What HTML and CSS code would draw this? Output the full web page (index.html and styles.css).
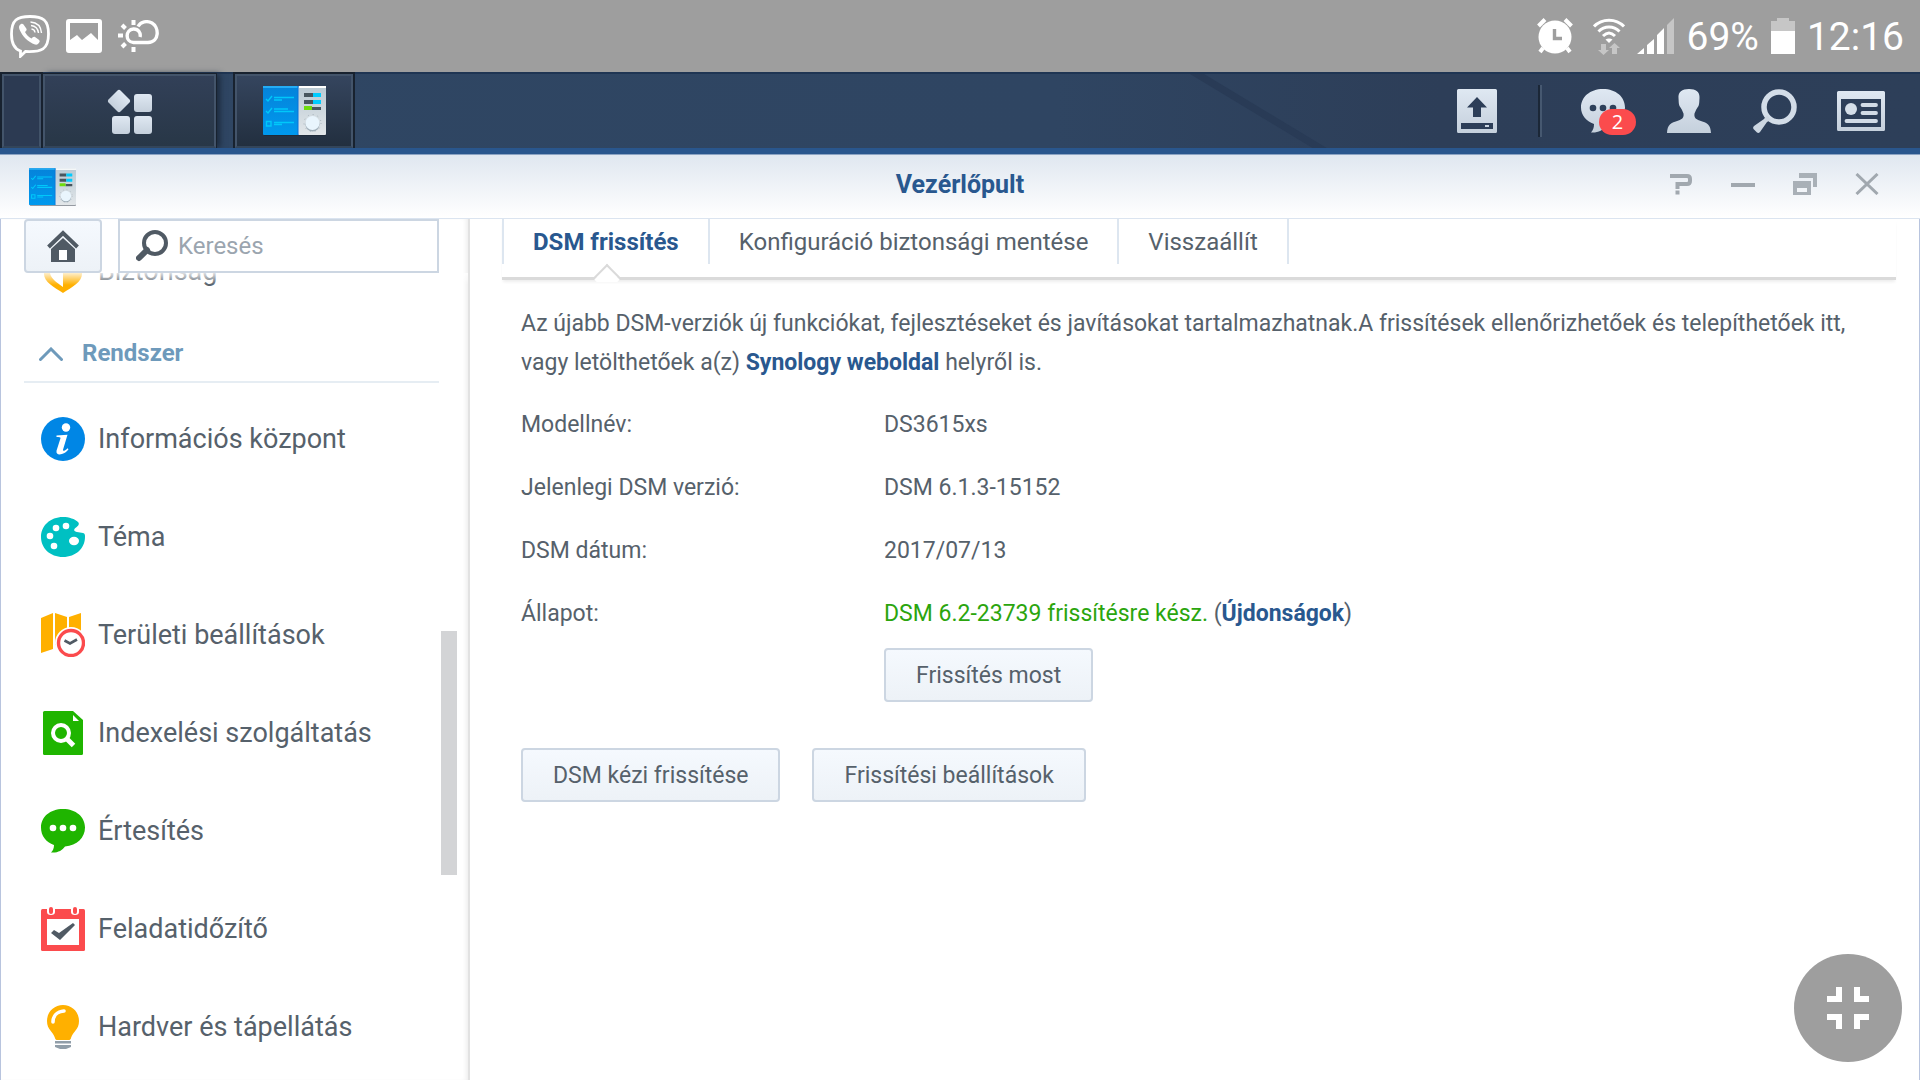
FILE: index.html
```
<!DOCTYPE html>
<html lang="hu">
<head>
    <meta charset="UTF-8">
    <meta name="viewport" content="width=device-width, initial-scale=1.0">
    <title>Vezérlőpult</title>
    <link rel="stylesheet" href="styles.css">
</head>
<body>
    <svg class="defs" aria-hidden="true">
        <linearGradient id="light" x1="0" y1="0" x2="0" y2="1">
            <stop offset="0" stop-color="#dfe8f2"/>
            <stop offset="1" stop-color="#c5d0dc"/>
        </linearGradient>
        <linearGradient id="blue" x1="0" y1="0" x2="0" y2="1">
            <stop offset="0" stop-color="#0583da"/>
            <stop offset="1" stop-color="#0099ee"/>
        </linearGradient>
        <linearGradient id="panel" x1="0" y1="0" x2="0" y2="1">
            <stop offset="0" stop-color="#b9c9d3"/>
            <stop offset="1" stop-color="#e2e6e9"/>
        </linearGradient>
        <symbol id="control-panel" viewBox="0 0 63 50">
            <rect x="1" y="2" width="62" height="48" rx="1" fill="#1c2733" opacity="0.6"/>
            <rect width="36" height="49" rx="1" fill="url(#blue)"/>
            <rect x="35" width="28" height="49" rx="1" fill="url(#panel)"/>
            <path d="M36 1h27" stroke="#fff" stroke-width="2"/>
            <path d="M0 1h35" stroke="#25adf5" stroke-width="2"/>
            <path d="M35 0v49" stroke="#0871d8"/>
            <g fill="none" stroke="#00c8fa" stroke-width="1.4">
                <path d="M3 13l2 2 4-5M3 25l2 2 4-5M3.500 35.500h4.500v4.500h-4.500z"/>
                <path d="M11 11.500h20M11 14h8M11 23h14M11 25.500h20M11 36.500h20M11 38.500h8"/>
            </g>
            <path d="M41 7h9v4h-9zM41 14h9v4h-9zM49 21h9v3h-9z" fill="#48565f"/>
            <path d="M50 7h8v4h-8zM50 14h8v4h-8z" fill="#0cf"/>
            <path d="M41 20h8v4h-8z" fill="#6fdc0c"/>
            <circle cx="49.500" cy="37" r="8.500" fill="none" stroke="#a3b1bb" stroke-width="1" stroke-dasharray="1 4"/>
            <circle cx="49.500" cy="38.500" r="7" fill="#8698a5" opacity="0.7"/>
            <circle cx="49.500" cy="37" r="7" fill="#e9f5fd"/>
        </symbol>
    </svg>

    <div class="statusbar">
        <div class="status-left">
            <svg width="40" height="43" viewBox="0 0 40 43" fill="none" stroke="#fff">
                <path d="M20 1.500C7 1.500 1.500 5 1.500 19c0 10 3 15 9 17v5.200l5-4.700c16 .8 23-2 23-17.500C38.500 5 33 1.500 20 1.500z" stroke-width="2.800"/>
                <path d="M11 9c-2 1-2.500 3-1.500 5.500 3 7 8.500 12.500 15.500 15 2 .5 3.500-.5 4.500-2.500.5-1 0-2-1-2.600l-3.500-2.400c-1.500-.8-2.500.5-3.500 1.500-3-1.500-5-3.500-6.500-6.500 1-1 2.300-2 1.300-3.500L13.500 9.500c-.6-.8-1.500-1-2.500-.5z" fill="#fff" stroke="none"/>
                <path d="M20.500 7c6.500.5 10.500 4.500 11 11M21 10.500c4 .5 7 3 7.500 7.500M21.500 14c2 .2 3.300 1.500 3.500 3.500" stroke-width="1.400"/>
            </svg>
            <svg width="36" height="34" viewBox="0 0 36 34">
                <path d="M3 0h30a3 3 0 0 1 3 3v28a3 3 0 0 1-3 3H3a3 3 0 0 1-3-3V3a3 3 0 0 1 3-3zM4 4v17l7-5 5 5 9-7 7 7V4z" fill="#fff" fill-rule="evenodd"/>
            </svg>
            <svg width="42" height="32" viewBox="0 0 42 32" fill="none" stroke="#fff" stroke-width="3.400">
                <path d="M20 6.500c3-5 9-6 14-3.500 7 4 8 19-4 19.500H15.500c-8.500-.5-8.500-13 0-13.500 5-.2 7.500 4 6.500 8"/>
                <path d="M15.500 0v5M15.500 27v5M0 15.500h5M4 5l3.500 3.500M4 27l3.500-3.500" stroke-width="4"/>
            </svg>
        </div>
        <div class="status-right">
            <svg width="36" height="36" viewBox="0 0 36 36">
                <path d="M6 30l-3 4M30 30l3 4" stroke="#fff" stroke-width="4"/>
                <path d="M1.500 8L8 1.500M28 1.500L34.500 8" stroke="#fff" stroke-width="4"/>
                <circle cx="18" cy="19" r="16.500" fill="#fff"/>
                <path d="M17.500 11v9.500H25" fill="none" stroke="#9e9e9e" stroke-width="3.400"/>
            </svg>
            <svg class="wifi" width="32" height="37" viewBox="0 0 32 37" fill="none" stroke="#fff" stroke-width="3">
                <path d="M1 8.500C9 0 23 0 31 8.500M5.500 13.500c6-6 15-6 21 0M10 18c4-4 8-4 12 0"/>
                <path d="M12.500 21.500c2-1.500 5-1.500 7 0L16 25z" fill="#fff" stroke="none"/>
                <path d="M8 26h5v6h3l-5.500 5L5 32h3zM19 36h5v-6h3l-5.500-5-5.500 5h3z" fill="#c6c6c6" stroke="none"/>
            </svg>
            <svg width="37" height="36" viewBox="0 0 37 36" fill="#fff">
                <path d="M0 36l7-6v6zM10 27l7-6v15h-7zM20 17l7-7v26h-7z"/>
                <path d="M30 7l7-7v36h-7z" fill="#c6c6c6"/>
            </svg>
            <span>69%</span>
            <svg width="24" height="36" viewBox="0 0 24 36">
                <path d="M6 0h12v3h6v11H0V3h6z" fill="#c6c6c6"/>
                <path d="M0 13h24v23H0z" fill="#fff"/>
            </svg>
            <span>12:16</span>
        </div>
    </div>

    <header class="taskbar">
        <button class="task-edge" aria-label="Asztal"></button>
        <button class="task-menu" aria-label="Főmenü">
            <svg width="45" height="45" viewBox="0 0 45 45" fill="url(#light)">
                <rect x="3.500" y="3.500" width="17" height="17" rx="2.500" transform="rotate(45 12 12)"/>
                <rect x="27" y="5" width="18" height="18" rx="3"/>
                <rect x="5" y="27" width="18" height="18" rx="3"/>
                <rect x="27" y="27" width="18" height="18" rx="3"/>
            </svg>
        </button>
        <button class="task-app" aria-label="Vezérlőpult">
            <svg width="63" height="50"><use href="#control-panel"/></svg>
        </button>
        <svg class="streak" width="140" height="76" viewBox="0 0 140 76">
            <path d="M0 0h14l126 76h-14z" fill="#293b56"/>
        </svg>
        <div class="tray">
            <button aria-label="Feltöltés">
                <svg width="40" height="44" viewBox="0 0 40 44">
                    <path d="M1.500 0h37A1.500 1.500 0 0 1 40 1.500v41a1.500 1.500 0 0 1-1.500 1.500h-37A1.500 1.500 0 0 1 0 42.500v-41A1.500 1.500 0 0 1 1.500 0zM20 8L10 18.500h6V28h8v-9.500h6zM4 34v6h32v-6zM28 36h4v2h-4z" fill="url(#light)" fill-rule="evenodd"/>
                </svg>
            </button>
            <span class="divider"></span>
            <button class="notify" aria-label="Értesítések">
                <svg width="44" height="44" viewBox="0 0 44 44">
                    <path d="M22 0C9 0 0 8 0 18.500 0 26 5 32 13 35c0 4-1 6-3 8.500 7 .5 12-2 15-7 11-1 19-8 19-18C44 8 35 0 22 0z" fill="url(#light)"/>
                    <g fill="#2e405a"><circle cx="12" cy="19" r="3.300"/><circle cx="22" cy="19" r="3.300"/><circle cx="32" cy="19" r="3.300"/></g>
                </svg>
                <span class="badge">2</span>
            </button>
            <button aria-label="Beállítások">
                <svg width="44" height="44" viewBox="0 0 44 44">
                    <path d="M22 0c7 0 11 3 10.500 9-.3 4 0 5.500-1 8-2 2.500-3 5-4 7.500-.6 4 1 5.500 5 7 8 2.500 11 4 11.500 12.500H0c.5-8.500 3.500-10 11.500-12.500 4-1.500 5.600-3 5-7-1-2.500-2-5-4-7.500-1-2.500-.7-4-1-8C11 3 15 0 22 0z" fill="url(#light)"/>
                </svg>
            </button>
            <button aria-label="Keresés">
                <svg width="44" height="44" viewBox="0 0 44 44">
                    <circle cx="26" cy="18" r="15" fill="none" stroke="#d3dde8" stroke-width="5.500"/>
                    <path d="M14 26l4 5-4 2-7 10q-1.500 1.500-3 .5L.5 40q-1-1.500.5-3l10-7z" fill="#ccd6e1"/>
                </svg>
            </button>
            <button aria-label="Widgetek">
                <svg width="48" height="40" viewBox="0 0 48 40">
                    <path d="M1.500 0h45A1.500 1.500 0 0 1 48 1.500v37a1.500 1.500 0 0 1-1.500 1.500h-45A1.500 1.500 0 0 1 0 38.500v-37A1.500 1.500 0 0 1 1.500 0zM4 8v28h40V8z" fill="url(#light)" fill-rule="evenodd"/>
                    <circle cx="14" cy="18" r="6" fill="#d5dfe9"/>
                    <path d="M25.500 14H39M25.500 22H39M9.500 30H39" stroke="#d2dce7" stroke-width="3.800" stroke-linecap="round"/>
                </svg>
            </button>
        </div>
    </header>

    <main class="window">
        <div class="titlebar">
            <svg class="title-icon" width="47" height="38"><use href="#control-panel"/></svg>
            <h1>Vezérlőpult</h1>
            <div class="window-buttons">
                <button aria-label="Súgó">
                    <svg width="24" height="22" viewBox="0 0 24 22" fill="none" stroke="#a1a8af" stroke-width="4">
                        <path d="M1 3h17q3 0 3 3v2q0 3-3 3H8.500v5M6.500 19.500h4"/>
                    </svg>
                </button>
                <button aria-label="Kis méret">
                    <svg width="24" height="22" viewBox="0 0 24 22"><path d="M0 12h24" stroke="#a1a8af" stroke-width="4"/></svg>
                </button>
                <button aria-label="Előző méret">
                    <svg width="24" height="22" viewBox="0 0 24 22" fill="#a9b0b7">
                        <path d="M6 0h18v14h-4V5H6z"/>
                        <path d="M0 8h18v14H0zM4 15v4h10v-4z" fill-rule="evenodd"/>
                    </svg>
                </button>
                <button aria-label="Bezárás">
                    <svg width="24" height="22" viewBox="0 0 24 22"><path d="M1.500 1l21 20M22.500 1l-21 20" stroke="#a1a8af" stroke-width="3"/></svg>
                </button>
            </div>
        </div>

        <div class="window-body">
            <aside class="sidebar">
                <div class="sidebar-tools">
                    <button class="btn home" aria-label="Kezdőlap">
                        <svg width="32" height="32" viewBox="0 0 32 32">
                            <path d="M1.500 17L16 3l14.500 14" fill="none" stroke="#505a64" stroke-width="4"/>
                            <path d="M4 19L16 8l12 11v13h-8V20h-8v12H4z" fill="#505a64"/>
                            <path d="M12 20h8v10h-8z" fill="#fff"/>
                            <path d="M4 31h24" stroke="#505a64" stroke-width="2"/>
                        </svg>
                    </button>
                    <label class="search">
                        <svg width="32" height="32" viewBox="0 0 32 32">
                            <circle cx="19" cy="13" r="11" fill="none" stroke="#505a64" stroke-width="4"/>
                            <path d="M11 20l-8 8" stroke="#505a64" stroke-width="6" stroke-linecap="round"/>
                        </svg>
                        <input type="text" placeholder="Keresés" aria-label="Keresés">
                    </label>
                </div>
                <nav class="menu">
                    <a class="item scrolled" href="#">
                        <svg width="44" height="44" viewBox="0 0 44 44">
                            <path d="M22 1l19 6v18c0 8-10 13-19 19C13 38 3 33 3 25V7z" fill="#ffb000"/>
                            <path d="M22 7v31c-7-5-13-9-13-15V11z" fill="#fff"/>
                        </svg>
                        Biztonság
                    </a>
                    <h2 class="section">
                        <svg width="24" height="14" viewBox="0 0 24 14"><path d="M1.500 12.500L12 2l10.500 10.500" fill="none" stroke="#6e9abb" stroke-width="3" stroke-linecap="round"/></svg>
                        Rendszer
                    </h2>
                    <a class="item" href="#">
                        <svg width="44" height="44" viewBox="0 0 44 44">
                            <circle cx="22" cy="22" r="22" fill="#0086e5"/>
                            <circle cx="25" cy="10.500" r="4.200" fill="#fff"/>
                            <path d="M15.500 18.500l11-.8-4.500 15c-.3 1.800 1.500 1.500 4.500-1.500l1 1c-3 5-13 8-12 1.500l4-12.500c.3-1-1.500-1.200-4-1.200z" fill="#fff"/>
                        </svg>
                        Információs központ
                    </a>
                    <a class="item" href="#">
                        <svg width="44" height="44" viewBox="0 0 44 44">
                            <path d="M22 2c6 0 12 2 15 5 2 2 0 4-2 5.500-3 2-2 4 1 4.500l6 1c2 .5 2 2 2 4 0 11-9 20-22 20S0 33 0 22 9 2 22 2z" fill="#00c0c2"/>
                            <g fill="#fff"><circle cx="9" cy="21" r="3.300"/><circle cx="15" cy="13" r="3.300"/><circle cx="25" cy="11" r="3.300"/><circle cx="13" cy="31" r="3.300"/><ellipse cx="33" cy="26" rx="5" ry="4.200"/></g>
                        </svg>
                        Téma
                    </a>
                    <a class="item" href="#">
                        <svg width="44" height="44" viewBox="0 0 44 44">
                            <path d="M0 5l12-5v36L0 40zM14 0l12 4v32l-12-4zM28 4l12-4v30H28z" fill="#ffb000"/>
                            <circle cx="30" cy="30" r="16" fill="#fff"/>
                            <circle cx="30" cy="30" r="12.500" fill="#fff" stroke="#fb4b4d" stroke-width="3.400"/>
                            <path d="M23.500 27.500l5.500 3 7-4" fill="none" stroke="#505a64" stroke-width="2.600"/>
                        </svg>
                        Területi beállítások
                    </a>
                    <a class="item" href="#">
                        <svg width="44" height="44" viewBox="0 0 44 44">
                            <path d="M3.500 0H32l10 9v33.500q0 1.500-1.500 1.500h-37Q2 44 2 42.500v-41Q2 0 3.500 0z" fill="#1fb500"/>
                            <path d="M32 4v6h6z" fill="#fff"/>
                            <circle cx="20" cy="22" r="8" fill="none" stroke="#fff" stroke-width="4"/>
                            <path d="M25.500 27.500l7 7" stroke="#fff" stroke-width="5"/>
                        </svg>
                        Indexelési szolgáltatás
                    </a>
                    <a class="item" href="#">
                        <svg width="44" height="44" viewBox="0 0 44 44">
                            <path d="M22 0C9 0 0 8 0 18.500 0 27 5 33 13 36c0 3-1 5.500-3 7.500 7 .5 11-2 14-6 12-1 20-9 20-19C44 8 35 0 22 0z" fill="#1fb500"/>
                            <g fill="#fff"><circle cx="12" cy="19" r="3.300"/><circle cx="22" cy="19" r="3.300"/><circle cx="32" cy="19" r="3.300"/></g>
                        </svg>
                        Értesítés
                    </a>
                    <a class="item" href="#">
                        <svg width="44" height="44" viewBox="0 0 44 44">
                            <rect y="2" width="44" height="42" rx="1.500" fill="#fb4b4d"/>
                            <path d="M6 12h32v26H6z" fill="#fff"/>
                            <path d="M6 0h8v5q0 3-4 3t-4-3zM30 0h8v5q0 3-4 3t-4-3z" fill="#fff"/>
                            <path d="M10 2v3M34 2v3" stroke="#fb4b4d" stroke-width="4" stroke-linecap="round"/>
                            <path d="M10 26l3-3 5 3L32 16l2 2-15 15z" fill="#505a64"/>
                        </svg>
                        Feladatidőzítő
                    </a>
                    <a class="item" href="#">
                        <svg width="44" height="44" viewBox="0 0 44 44">
                            <path d="M22 0c9 0 16 7 16 16 0 9-6 10-8 17-.3 1.500-1 2-2.500 2h-11c-1.500 0-2.200-.5-2.500-2-2-7-8-8-8-17C6 7 13 0 22 0z" fill="#ffb000"/>
                            <path d="M12 17c0-6 4-10.500 11-11" fill="none" stroke="#fff" stroke-width="3.600" stroke-linecap="round"/>
                            <path d="M14 36h16v2.500H14zM14 40h16v2l-5 2h-6l-5-2z" fill="#919ea9"/>
                        </svg>
                        Hardver és tápellátás
                    </a>
                </nav>
                <div class="scrollbar"></div>
            </aside>

            <section class="content">
                <nav class="tabs">
                    <a class="tab active" href="#">DSM frissítés</a>
                    <a class="tab" href="#">Konfiguráció biztonsági mentése</a>
                    <a class="tab" href="#">Visszaállít</a>
                </nav>
                <div class="details">
                    <p>Az újabb DSM-verziók új funkciókat, fejlesztéseket és javításokat tartalmazhatnak.A frissítések ellenőrizhetőek és telepíthetőek itt, vagy letölthetőek a(z) <a href="#">Synology weboldal</a> helyről is.</p>
                    <table>
                        <tr><th>Modellnév:</th><td>DS3615xs</td></tr>
                        <tr><th>Jelenlegi DSM verzió:</th><td>DSM 6.1.3-15152</td></tr>
                        <tr><th>DSM dátum:</th><td>2017/07/13</td></tr>
                        <tr><th>Állapot:</th><td><span class="ready">DSM 6.2-23739 frissítésre kész.</span> (<a href="#">Újdonságok</a>)</td></tr>
                        <tr class="action"><td></td><td><button class="btn">Frissítés most</button></td></tr>
                    </table>
                    <div class="buttons">
                        <button class="btn">DSM kézi frissítése</button>
                        <button class="btn">Frissítési beállítások</button>
                    </div>
                </div>
            </section>
        </div>
    </main>

    <button class="shrink" aria-label="Kilépés a teljes képernyőből">
        <svg width="42" height="42" viewBox="0 0 42 42" fill="none" stroke="#fff" stroke-width="6">
            <path d="M0 12h12V0M42 12H30V0M0 30h12v12M42 30H30v12"/>
        </svg>
    </button>
</body>
</html>
```
FILE: styles.css
```
* {
    box-sizing: border-box;
    margin: 0;
    padding: 0;
}

body {
    display: flex;
    flex-direction: column;
    height: 100vh;
    overflow: hidden;
    font-family: Roboto, sans-serif;
    font-size: 24px;
    line-height: 39px;
    color: #56616b;
    background: #fff;
}

button {
    font: inherit;
    color: inherit;
    background: none;
    border: none;
    cursor: pointer;
}

a {
    color: #29588f;
    font-weight: bold;
    text-decoration: none;
}

svg {
    display: block;
    flex-shrink: 0;
}

.defs {
    position: absolute;
    width: 0;
    height: 0;
}

/* phone status bar */
.statusbar {
    display: flex;
    justify-content: space-between;
    align-items: center;
    flex-shrink: 0;
    height: 72px;
    padding: 0 16px 0 10px;
    background: #9e9e9e;
    color: #fff;
    font-size: 39px;
}

.status-left {
    display: flex;
    align-items: center;
    gap: 16px;
}

.status-right {
    display: flex;
    align-items: center;
    gap: 12px;
}

.status-right span {
    padding-top: 2px;
}

.wifi {
    margin-left: 8px;
}

/* taskbar */
.taskbar {
    display: flex;
    flex-shrink: 0;
    height: 76px;
    border-top: 2px solid #1f3553;
    background: linear-gradient(90deg, #2f4663, #2f4562 55%, #2d3e58 75%, #2d3f59);
}

.taskbar button {
    display: flex;
    justify-content: center;
    align-items: center;
}

.taskbar .task-edge,
.taskbar .task-menu,
.taskbar .task-app {
    border: 2px solid #43546a;
    border-bottom-color: #33455a;
    background: linear-gradient(#324058, #283747);
    box-shadow: 0 0 0 2px #18222f;
}

.taskbar .task-edge {
    width: 39px;
    margin-left: 2px;
    background: #2c3a52;
}

.taskbar .task-menu {
    width: 173px;
    margin-left: 2px;
    box-shadow: 0 0 0 1px #18222f, 4px 0 6px #1c2a3c;
}

.taskbar .task-app {
    width: 118px;
    margin-left: 19px;
    background: linear-gradient(#35455e, #222f3f);
}

.streak {
    margin-left: auto;
}

.tray {
    display: flex;
    align-items: center;
    margin-left: 104px;
    padding-right: 16px;
}

.tray button {
    width: 86px;
    height: 74px;
}

.divider {
    width: 4px;
    height: 52px;
    margin: 0 18px;
    border-left: 2px solid #1b2737;
    border-right: 2px solid #465870;
}

.notify {
    position: relative;
}

.badge {
    position: absolute;
    left: 39px;
    top: 35px;
    width: 37px;
    border-radius: 13px;
    background: #fb4b4d;
    color: #fff;
    font: 20px/26px "Open Sans", sans-serif;
}

/* window */
.window {
    display: flex;
    flex-direction: column;
    flex: 1;
    min-height: 0;
    border-top: 6px solid #29568d;
}

.titlebar {
    display: grid;
    grid-template-columns: 1fr auto 1fr;
    align-items: center;
    flex-shrink: 0;
    height: 65px;
    padding: 0 22px;
    border-top: 1px solid #8ba3c3;
    border-bottom: 1px solid #dbe4f0;
    background: linear-gradient(#e0e7f0, #fff);
}

.title-icon {
    margin-left: 7px;
}

.titlebar h1 {
    padding-bottom: 5px;
    font-size: 25px;
    color: #29588f;
}

.window-buttons {
    display: flex;
    justify-content: flex-end;
    padding-bottom: 5px;
}

.window-buttons button {
    display: flex;
    justify-content: center;
    width: 62px;
}

.window-body {
    display: flex;
    flex: 1;
    min-height: 0;
    border-left: 1px solid #b8c4de;
    border-right: 1px solid #b8c4de;
}

/* sidebar */
.sidebar {
    position: relative;
    display: flex;
    flex-direction: column;
    width: 469px;
    flex-shrink: 0;
    padding-left: 23px;
    border-right: 2px solid #e2e2e2;
    box-shadow: inset -4px 0 4px -2px #eee;
}

.sidebar-tools {
    display: flex;
    gap: 16px;
    flex-shrink: 0;
    padding-right: 29px;
}

.btn {
    height: 54px;
    padding: 0 28px;
    border: 2px solid #ccd6e2;
    border-radius: 4px;
    background: linear-gradient(#f5f9fe, #edf2f7);
}

.home {
    display: flex;
    justify-content: center;
    align-items: center;
    width: 78px;
    padding: 0;
}

.search {
    display: flex;
    align-items: center;
    gap: 10px;
    flex: 1;
    padding-left: 16px;
    border: 2px solid #ccd6e2;
}

.search input {
    width: 100%;
    border: none;
    outline: none;
    font: inherit;
    color: inherit;
}

.search input::placeholder {
    color: #9ba5af;
}

.menu {
    position: relative;
    flex: 1;
    overflow: hidden;
    padding-right: 29px;
}

.menu::before {
    content: "";
    position: absolute;
    top: 0;
    left: 0;
    right: 0;
    height: 12px;
    background: linear-gradient(rgba(255, 255, 255, 0.8), rgba(255, 255, 255, 0));
}

.item {
    display: flex;
    align-items: center;
    gap: 13px;
    height: 98px;
    padding-left: 17px;
    font-size: 27px;
    font-weight: normal;
    color: #56616b;
}

.scrolled {
    margin-top: -51px;
}

.section {
    display: flex;
    align-items: center;
    gap: 19px;
    height: 63px;
    margin-bottom: 7px;
    padding: 6px 0 0 15px;
    border-bottom: 2px solid #e6edf3;
    font-size: 24px;
    color: #6e9abb;
}

.scrollbar {
    position: absolute;
    top: 412px;
    right: 11px;
    width: 16px;
    height: 244px;
    background: #d3d4d6;
}

/* content */
.content {
    flex: 1;
    padding: 0 23px 0 32px;
}

.tabs {
    display: flex;
    height: 61px;
    padding-bottom: 13px;
    border-bottom: 3px solid #dadada;
    box-shadow: 0 3px 3px -1px #eee;
}

.tab {
    position: relative;
    padding: 4px 29px 0;
    border-right: 2px solid #dde6f0;
    font-weight: normal;
    color: #56616b;
}

.tab.active {
    border-left: 2px solid #dde6f0;
    font-weight: bold;
    color: #29588f;
}

.tab.active::after {
    content: "";
    position: absolute;
    left: 50%;
    bottom: -24px;
    width: 18px;
    height: 18px;
    margin-left: -9px;
    border: solid #dadada;
    border-width: 2px 0 0 2px;
    background: linear-gradient(135deg, #fff 60%, transparent 60%);
    transform: rotate(45deg);
}

.details {
    padding: 24px 0 0 19px;
    font-size: 23px;
}

.details table {
    width: 100%;
    margin-top: 11px;
    border-collapse: collapse;
}

.details th,
.details td {
    height: 63px;
    text-align: left;
    font-weight: normal;
}

.details th {
    width: 363px;
}

.details .action td {
    height: 60px;
}

.details .btn {
    display: block;
    padding: 0 30px;
}

.ready {
    color: #2ba50e;
}

.buttons {
    display: flex;
    gap: 32px;
    margin-top: 43px;
}

/* floating button */
.shrink {
    position: fixed;
    right: 18px;
    bottom: 18px;
    display: flex;
    justify-content: center;
    align-items: center;
    width: 108px;
    height: 108px;
    border-radius: 50%;
    background: #9e9e9e;
}
```
